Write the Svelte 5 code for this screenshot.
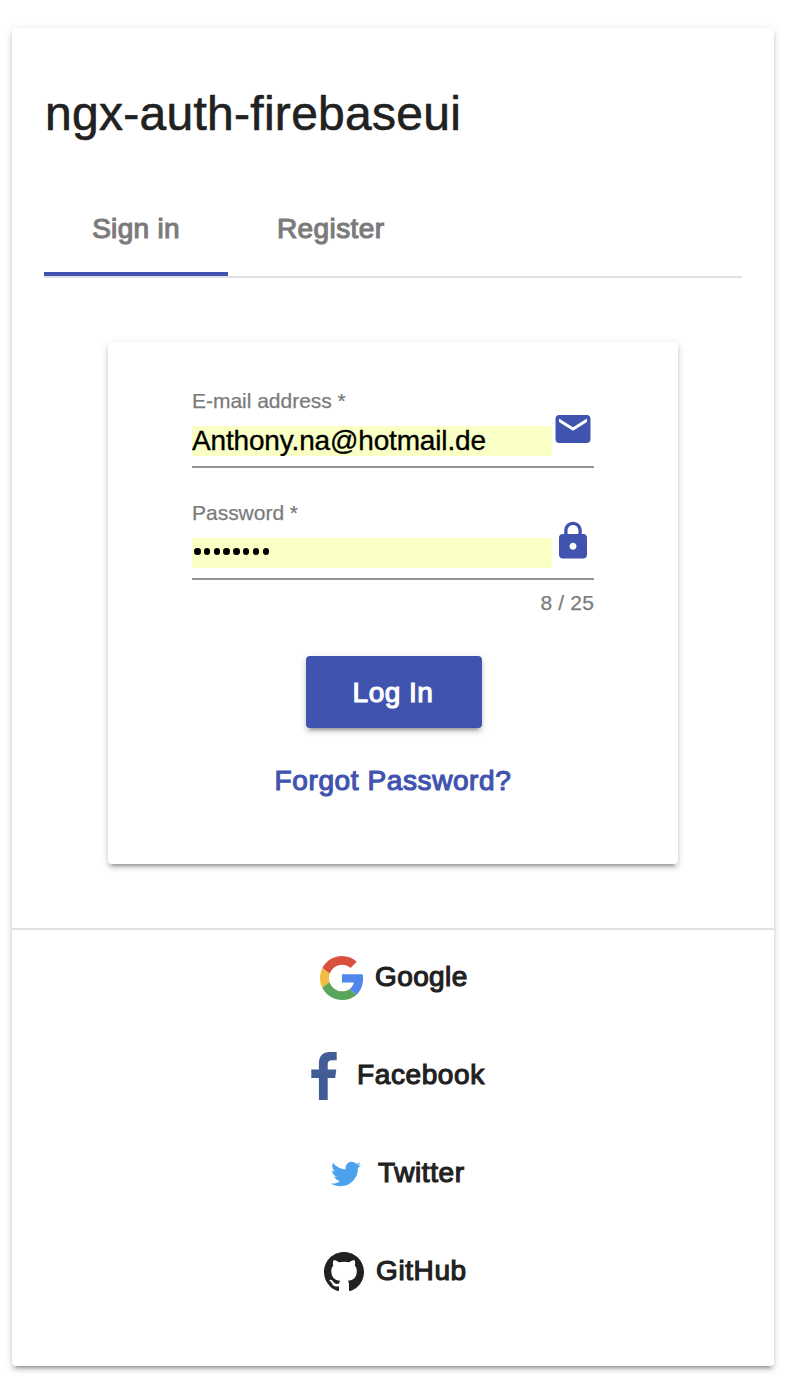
<script>
  const tabs = [
    { label: 'Sign in', active: true },
    { label: 'Register', active: false }
  ];
  let email = $state('Anthony.na@hotmail.de');
  let password = $state('password');
</script>

<main class="card outer">
  <h1>ngx-auth-firebaseui</h1>
  <nav class="tabs">
    {#each tabs as tab}
      <button class="tab" class:active={tab.active}><span class="t {tab.active ? 't-sign' : 't-register'}">{tab.label}</span></button>
    {/each}
  </nav>

  <section class="card login">
    <div class="field">
      <label for="email">E-mail address *</label>
      <div class="control">
        <input id="email" type="text" bind:value={email} />
        <svg viewBox="0 0 24 24"><path d="M20 4H4c-1.1 0-1.99.9-1.99 2L2 18c0 1.1.9 2 2 2h16c1.1 0 2-.9 2-2V6c0-1.1-.9-2-2-2zm0 4l-8 5-8-5V6l8 5 8-5v2z" /></svg>
      </div>
    </div>
    <div class="field">
      <label for="password">Password *</label>
      <div class="control">
        <div class="masked" id="password" role="textbox" tabindex="0">
          {#each password as _}<i></i>{/each}
        </div>
        <svg viewBox="0 0 24 24"><path d="M18 8h-1V6c0-2.76-2.24-5-5-5S7 3.240 7 6v2H6c-1.100 0-2 .9-2 2v10c0 1.100.9 2 2 2h12c1.100 0 2-.9 2-2V10c0-1.100-.9-2-2-2zm-6 9c-1.100 0-2-.9-2-2s.9-2 2-2 2 .9 2 2-.9 2-2 2zm3.100-9H8.900V6c0-1.710 1.390-3.100 3.100-3.100s3.100 1.390 3.100 3.100v2z" /></svg>
      </div>
    </div>
    <div class="hint">{password.length} / 25</div>
    <button class="submit"><span class="t t-login">Log In</span></button>
    <button class="forgot"><span class="t t-forgot">Forgot Password?</span></button>
  </section>

  <footer class="providers">
    <button class="provider google">
      <svg width="44" height="44" viewBox="0 0 48 48">
        <path fill="#d9503f" d="M24 9.5c3.54 0 6.71 1.22 9.21 3.6l6.85-6.85C35.9 2.38 30.47 0 24 0 14.62 0 6.51 5.38 2.56 13.22l7.98 6.19C12.43 13.72 17.74 9.5 24 9.5z" />
        <path fill="#5087ec" d="M46.98 24.55c0-1.57-.15-3.09-.38-4.55H24v9.02h12.94c-.58 2.96-2.26 5.48-4.78 7.18l7.73 6c4.51-4.18 7.09-10.36 7.09-17.65z" />
        <path fill="#f3bc42" d="M10.53 28.59c-.48-1.45-.76-2.99-.76-4.59s.27-3.14.76-4.59l-7.98-6.19C.92 16.46 0 20.12 0 24c0 3.88.92 7.54 2.56 10.78l7.97-6.19z" />
        <path fill="#58a55b" d="M24 48c6.48 0 11.93-2.13 15.89-5.81l-7.73-6c-2.15 1.45-4.92 2.3-8.16 2.3-6.26 0-11.57-4.22-13.47-9.91l-7.98 6.19C6.51 42.62 14.62 48 24 48z" />
      </svg>
      <span class="t">Google</span>
    </button>
    <button class="provider facebook">
      <svg width="26" height="48" viewBox="0 0 26 48"><path fill="#425c96" d="M25.700 0V8.200H21Q16.700 8.200 16.700 12V17.400H25.300L24.200 25.900H16.700V48H7.900V25.900H.3V17.400H7.900V11.500C7.900 4.100 11.900 0 18.600 0Z" /></svg>
      <span class="t">Facebook</span>
    </button>
    <button class="provider twitter">
      <svg width="30" height="30" viewBox="0 0 24 24"><path fill="#4da2ee" d="M23.954 4.569c-.885.389-1.83.654-2.825.775 1.014-.611 1.794-1.574 2.163-2.723-.951.555-2.005.959-3.127 1.184-.896-.959-2.173-1.559-3.591-1.559-2.717 0-4.92 2.203-4.92 4.917 0 .39.045.765.127 1.124C7.691 8.094 4.066 6.13 1.64 3.161c-.427.722-.666 1.561-.666 2.475 0 1.71.87 3.213 2.188 4.096-.807-.026-1.566-.248-2.228-.616v.061c0 2.385 1.693 4.374 3.946 4.827-.413.111-.849.171-1.296.171-.314 0-.615-.03-.916-.086.631 1.953 2.445 3.377 4.604 3.417-1.68 1.319-3.809 2.105-6.102 2.105-.39 0-.779-.023-1.17-.067 2.189 1.394 4.768 2.209 7.557 2.209 9.054 0 13.999-7.496 13.999-13.986 0-.209 0-.42-.015-.63.961-.689 1.8-1.56 2.46-2.548l-.047-.02z" /></svg>
      <span class="t">Twitter</span>
    </button>
    <button class="provider github">
      <svg width="40" height="40" viewBox="0 0 16 16"><path fill="#212121" d="M8 0C3.58 0 0 3.58 0 8c0 3.54 2.29 6.53 5.47 7.59.4.07.55-.17.55-.38 0-.19-.01-.82-.01-1.49-2.01.37-2.53-.49-2.69-.94-.09-.23-.48-.94-.82-1.13-.28-.15-.68-.52-.01-.53.63-.01 1.08.58 1.23.82.72 1.21 1.87.87 2.33.66.07-.52.28-.87.51-1.07-1.78-.2-3.64-.89-3.64-3.95 0-.87.31-1.59.82-2.15-.08-.2-.36-1.02.08-2.12 0 0 .67-.21 2.2.82.64-.18 1.32-.27 2-.27.68 0 1.36.09 2 .27 1.53-1.04 2.2-.82 2.2-.82.44 1.1.16 1.92.08 2.12.51.56.82 1.27.82 2.15 0 3.07-1.87 3.75-3.65 3.95.29.25.54.73.54 1.48 0 1.07-.01 1.93-.01 2.2 0 .21.15.46.55.38A8.013 8.013 0 0016 8c0-4.420-3.580-8-8-8z" /></svg>
      <span class="t">GitHub</span>
    </button>
  </footer>
</main>

<style>
  :global(body) {
    background: #fff;
    font-family: "Liberation Sans", Arial, sans-serif;
    color: #212121;
  }
  :global(#app) { display: flow-root; }
  button { border: 0; background: none; padding: 0; margin: 0; font: inherit; color: inherit; }
  .card {
    box-sizing: border-box;
    background: #fff;
    border-radius: 4px;
    box-shadow: 0 6px 2px -4px rgba(0, 0, 0, .2), 0 4px 4px 0 rgba(0, 0, 0, .14), 0 2px 10px 0 rgba(0, 0, 0, .12);
  }
  .outer { width: 762px; height: 1338px; margin: 28px 0 26px 12px; display: flex; flex-direction: column; }
  h1 { margin: 58px 32px 38px 33px; font-weight: 400; font-size: 48px; line-height: 56px; letter-spacing: .28px; font-variant-ligatures: none; -webkit-text-stroke: .6px currentColor; }
  .t { font-size: 28px; line-height: 36px; white-space: nowrap; -webkit-text-stroke: 1.15px currentColor; }
  .tabs { display: flex; height: 96px; margin: 0 32px; border-bottom: 2px solid #e0e0e0; color: #7b7b7b; }
  .tab { box-sizing: border-box; height: 96px; padding: 6px 48px 0; border-bottom: 4px solid transparent; }
  .tab.active { width: 184px; border-color: #4054af; }
  .t-sign { letter-spacing: .3px; }
  .t-register { letter-spacing: .4px; padding-left: 1px; }
  .login { width: 570px; height: 522px; margin: 64px 0 0 96px; padding: 44px 84px 0; display: flex; flex-direction: column; align-items: center; }
  .field { width: 402px; height: 80px; border-bottom: 2px solid #949494; margin-bottom: 30px; }
  label { display: block; font-size: 21px; line-height: 30px; height: 27px; color: #7b7b7b; letter-spacing: -.02px; -webkit-text-stroke: .25px currentColor; }
  .control { display: flex; height: 43px; }
  .control input, .masked { box-sizing: border-box; width: 360px; height: 30px; margin: 13px 0 0; border: 0; padding: 0; background: #faffc5; }
  .control input { font: 28px/30px "Liberation Sans", Arial, sans-serif; letter-spacing: -.16px; color: #000; outline: 0; -webkit-text-stroke: .35px currentColor; }
  .masked { display: flex; align-items: center; gap: 3.300px; padding: 0 0 3px 2px; }
  .masked i { width: 6.500px; height: 6.500px; border-radius: 50%; background: #000; }
  .control svg { width: 42px; height: 42px; margin-top: -5px; flex: none; fill: #4054af; }
  .hint { align-self: flex-end; margin-top: -21px; font-size: 21px; line-height: 28px; letter-spacing: .15px; color: #7b7b7b; -webkit-text-stroke: .25px currentColor; }
  .submit { width: 176px; height: 72px; flex: none; margin: 39px 0 0 2px; padding-top: 2px; border-radius: 4px; background: #4054af; color: #fff; box-shadow: 0 6px 2px -4px rgba(0, 0, 0, .2), 0 4px 4px 0 rgba(0, 0, 0, .14), 0 2px 10px 0 rgba(0, 0, 0, .12); }
  .t-login { letter-spacing: .5px; margin-right: 2px; }
  .forgot { margin-top: 35px; color: #4054af; }
  .t-forgot { letter-spacing: .6px; }
  .providers { margin-top: 64px; border-top: 2px solid #e0e0e0; }
  .provider { box-sizing: border-box; display: flex; align-items: center; height: 98px; width: 100%; padding-bottom: 2px; }
  .provider .t { letter-spacing: .6px; padding-bottom: 2px; }
  .google { padding-left: 308px; gap: 11px; }
  .provider.google .t { letter-spacing: .4px; }
  .facebook { padding-left: 299px; gap: 20px; }
  .twitter { padding-left: 319px; gap: 17px; }
  .github { padding-left: 312px; gap: 12px; }
</style>
